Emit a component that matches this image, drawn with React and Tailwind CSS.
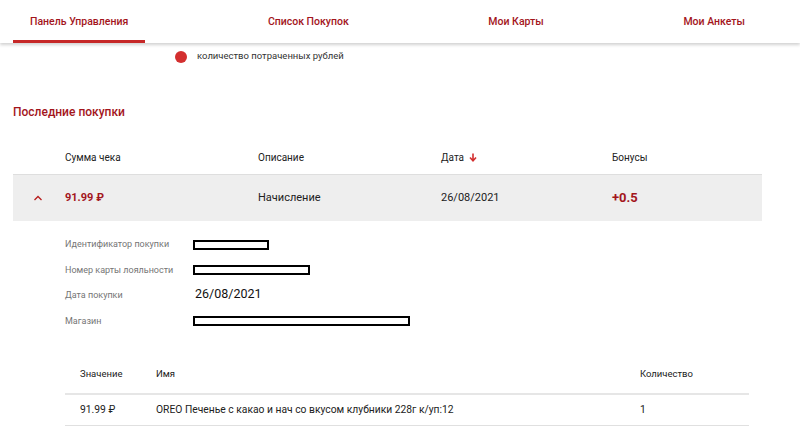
import React from 'react';

const tabs = ['Панель Управления', 'Список Покупок', 'Мои Карты', 'Мои Анкеты'];

function Redacted({ width }) {
  return <div className="h-[10px] border-2 border-black bg-white" style={{ width }} />;
}

function App() {
  return (
    <div className="w-[800px] h-[439px] overflow-hidden bg-white font-['Roboto',sans-serif] text-[#212121]">
      {/* top tabs */}
      <nav className="h-[43px] flex justify-between pl-[13px] pr-[38px] shadow-[0_2px_3px_rgba(0,0,0,0.18)] relative z-10">
        {tabs.map((t, i) => (
          <div
            key={t}
            className={
              'h-full px-[17px] flex items-center text-[10.5px] font-medium text-[#a3151c] ' +
              (i === 0 ? 'border-b-[3px] border-[#c62828] pt-[3px]' : '')
            }
          >
            {t}
          </div>
        ))}
      </nav>

      {/* chart legend */}
      <div className="flex items-center pl-[175px] pt-[3px] h-[24px]">
        <span className="w-[12px] h-[12px] rounded-full bg-[#d32f2f]" />
        <span className="ml-[10px] text-[9.5px] text-[#333]">количество потраченных рублей</span>
      </div>

      <h2 className="pl-[13px] mt-[37px] text-[12px] font-medium text-[#a3151c] leading-[16px]">Последние покупки</h2>

      {/* purchases table */}
      <div className="mx-[13px] w-[749px] mt-[20px]">
        <div className="flex items-center h-[35px] border-b border-[#dedede] text-[10px] text-[#212121]">
          <div className="w-[52px]" />
          <div className="w-[193px]">Сумма чека</div>
          <div className="w-[183px]">Описание</div>
          <div className="w-[171px] flex items-center gap-[5px]">
            Дата
            <svg width="8" height="9" viewBox="0 0 8 9" fill="none" stroke="#d32f2f" strokeWidth="1.6">
              <path d="M4 0.5v7M1 4.5l3 3.3 3-3.3" />
            </svg>
          </div>
          <div>Бонусы</div>
        </div>
        <div className="flex items-center h-[46px] bg-[#eeeeee] text-[11px]">
          <div className="w-[52px] flex justify-center pr-[3px]">
            <svg width="10" height="6" viewBox="0 0 10 6" fill="none" stroke="#b71c1c" strokeWidth="1.3">
              <path d="M1.5 5l3.5-3.5 3.5 3.5" />
            </svg>
          </div>
          <div className="w-[193px] font-bold text-[#a3151c]">91.99 ₽</div>
          <div className="w-[183px]">Начисление</div>
          <div className="w-[171px]">26/08/2021</div>
          <div className="text-[13px] font-bold text-[#a3151c]">+0.5</div>
        </div>
      </div>

      {/* purchase details */}
      <div className="pl-[65px] pt-[11px] flex flex-col">
        <div className="flex items-center h-[25.5px]">
          <div className="w-[128px] text-[9px] text-[#757575]">Идентификатор покупки</div>
          <Redacted width={76} />
        </div>
        <div className="flex items-center h-[25.5px]">
          <div className="w-[128px] text-[9px] text-[#757575]">Номер карты лояльности</div>
          <Redacted width={117} />
        </div>
        <div className="flex items-center h-[25.5px]">
          <div className="w-[128px] text-[9px] text-[#757575]">Дата покупки</div>
          <div className="pl-[2px] text-[12.5px] text-[#111] -mt-[2px]">26/08/2021</div>
        </div>
        <div className="flex items-center h-[25.5px]">
          <div className="w-[128px] text-[9px] text-[#757575]">Магазин</div>
          <Redacted width={217} />
        </div>
      </div>

      {/* items table */}
      <div className="ml-[65px] w-[684px] mt-[22px]">
        <div className="flex items-center h-[39px] border-b-2 border-[#e6e6e6] text-[9.5px] text-[#212121]">
          <div className="w-[91px] pl-[15px]">Значение</div>
          <div className="w-[484px]">Имя</div>
          <div>Количество</div>
        </div>
        <div className="flex items-center h-[31px] border-b border-[#e0e0e0] text-[10.3px] text-[#212121]">
          <div className="w-[91px] pl-[15px]">91.99 ₽</div>
          <div className="w-[484px]">OREO Печенье с какао и нач со вкусом клубники 228г к/уп:12</div>
          <div>1</div>
        </div>
      </div>
    </div>
  );
}

export default App;
